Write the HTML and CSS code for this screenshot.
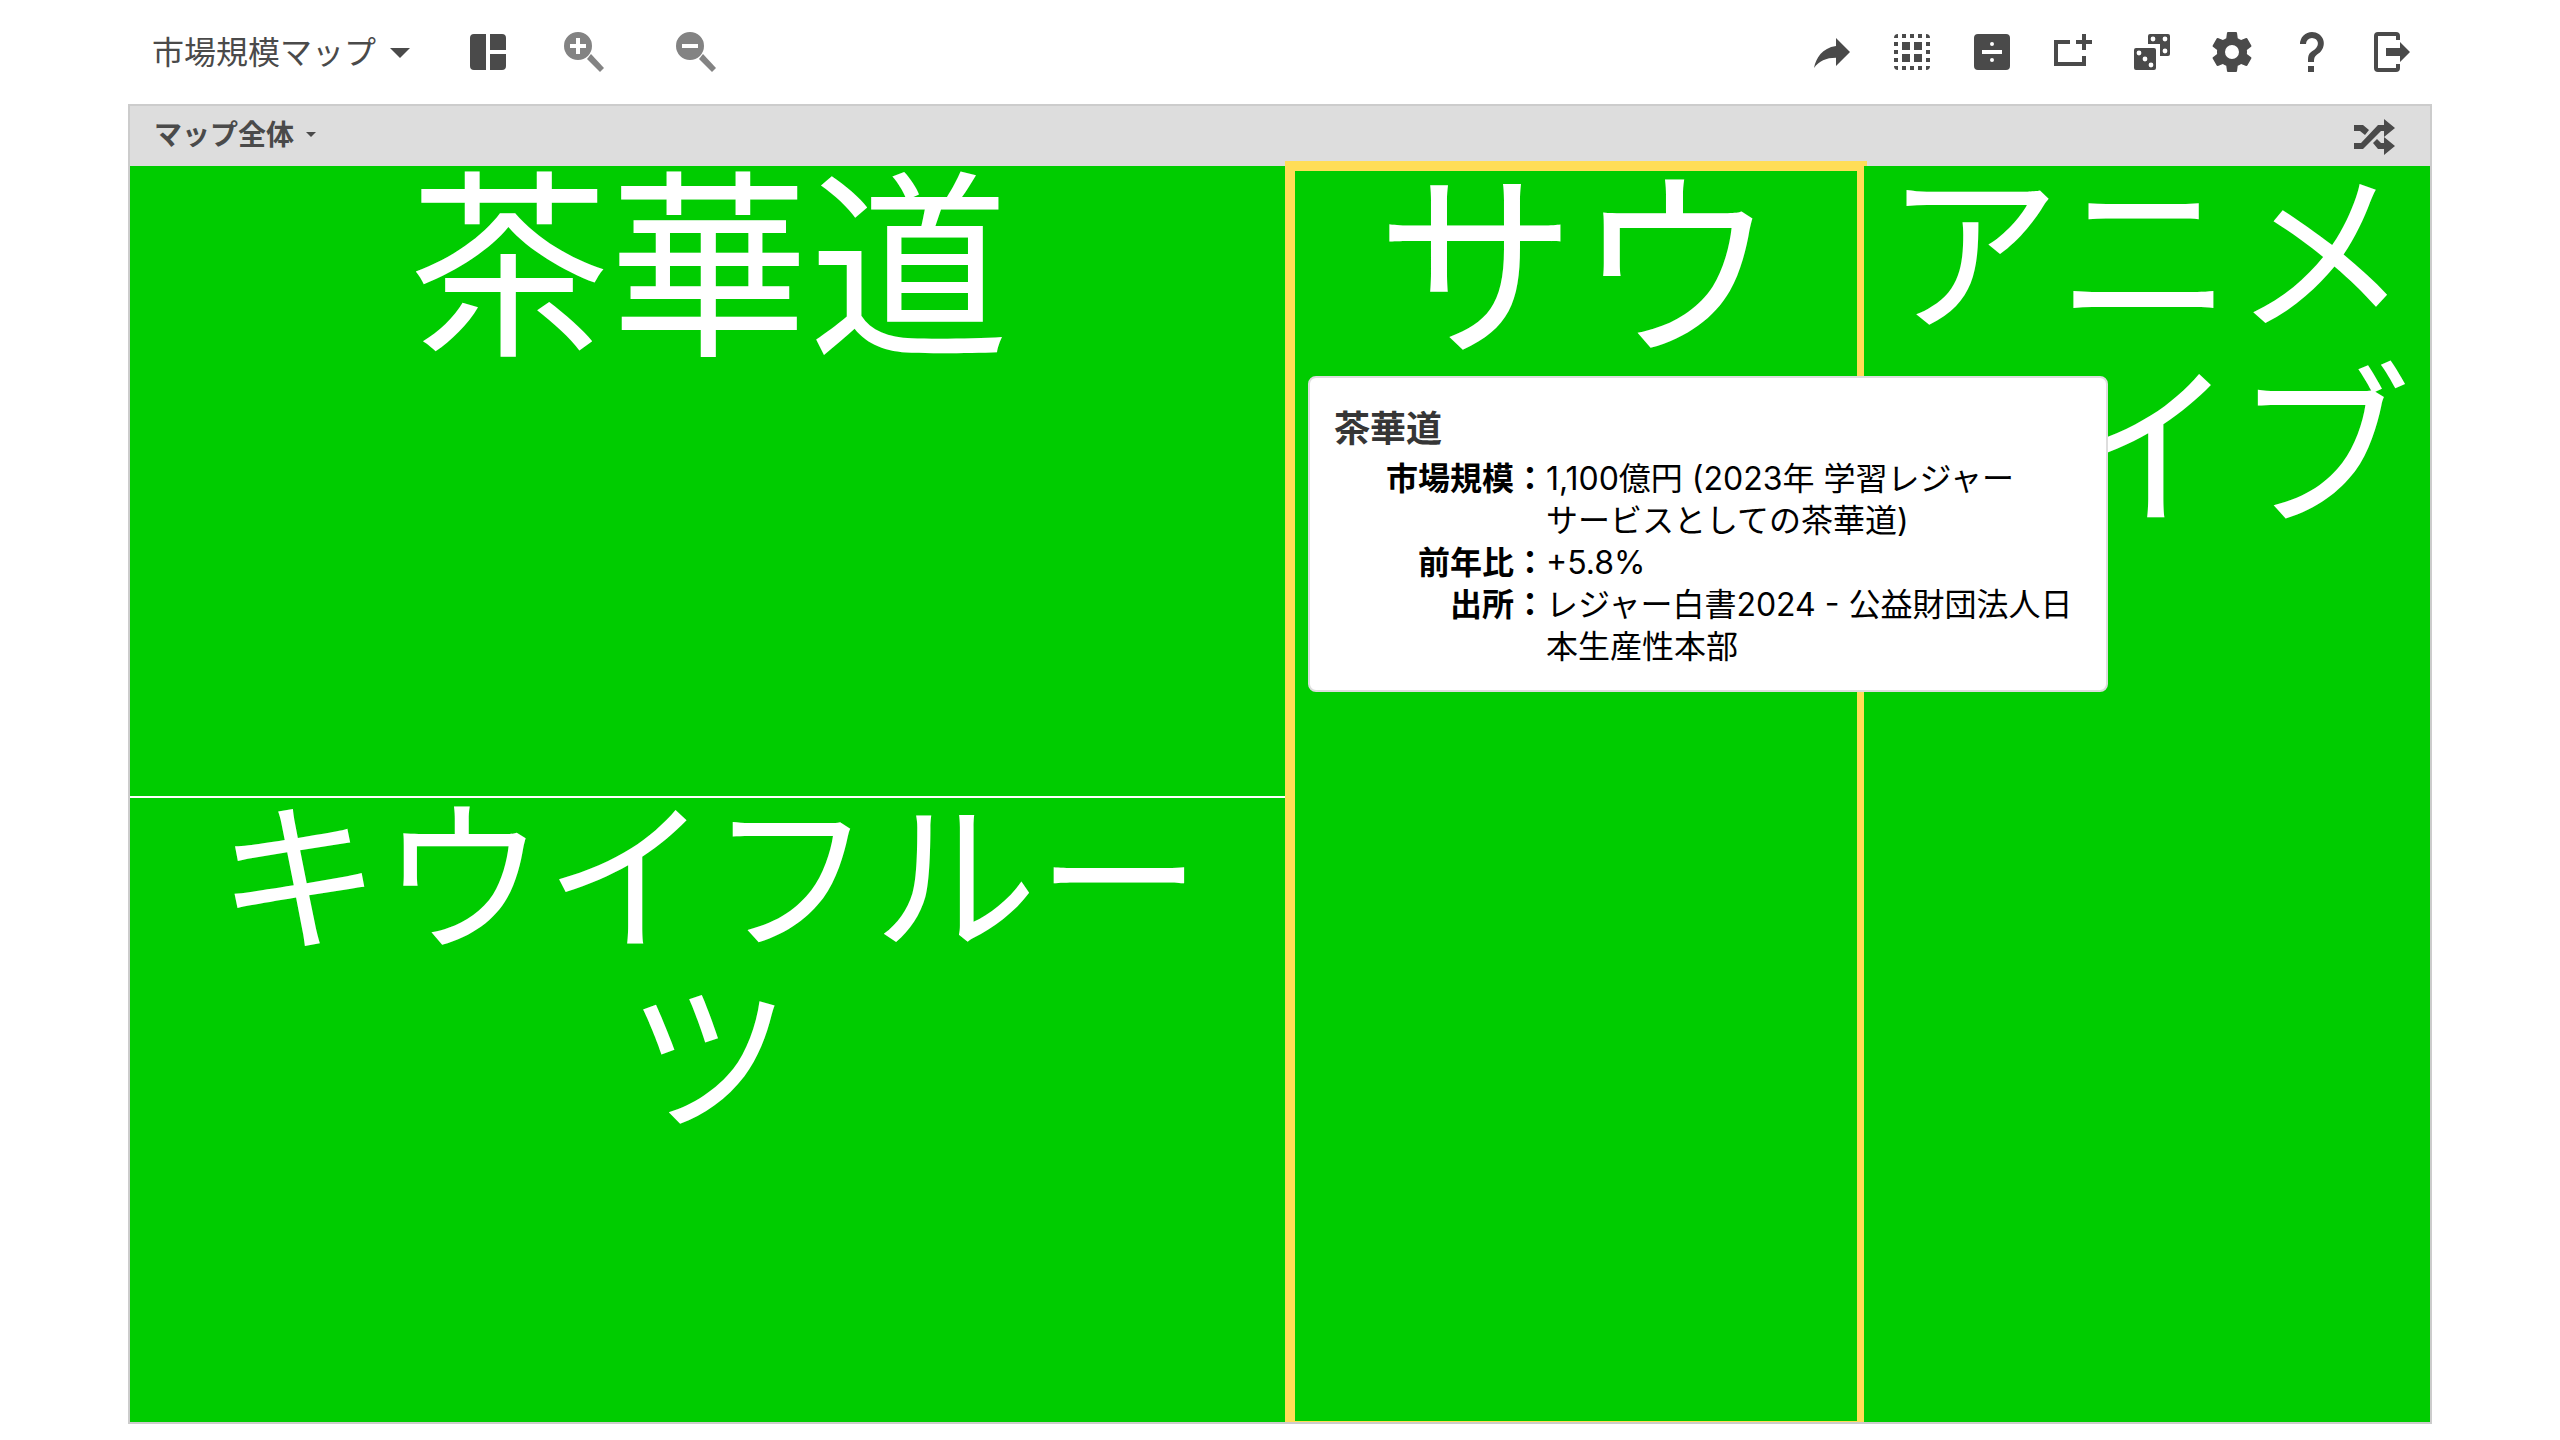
FILE: index.html
```html
<!DOCTYPE html>
<html lang="ja">
<head>
<meta charset="utf-8">
<title>市場規模マップ</title>
<meta name="viewport" content="width=device-width, initial-scale=1">
<link rel="stylesheet" href="styles.css">
</head>
<body>
<div class="page">
  <header class="toolbar">
    <button class="map-menu" type="button">市場規模マップ<span class="caret"></span></button>
    <button class="icon-button layout-button" type="button" aria-label="レイアウト">
      <svg class="icon" viewBox="0 0 24 24"><path d="M5 3H11V21H5A2 2 0 0 1 3 19V5A2 2 0 0 1 5 3ZM13 3H19A2 2 0 0 1 21 5V11H13ZM13 13H21V19A2 2 0 0 1 19 21H13Z"/></svg>
    </button>
    <div class="zoom-group">
      <button class="icon-button muted" type="button" aria-label="拡大">
        <svg class="zoom-icon" viewBox="0 0 40 40"><path fill-rule="evenodd" d="M14 0A14 14 0 1 1 14 28A14 14 0 1 1 14 0ZM12 6V12H6V16H12V22H16V16H22V12H16V6Z"/><path d="M27 22L40 36L36 40L23 27Z"/></svg>
      </button>
      <button class="icon-button muted" type="button" aria-label="縮小">
        <svg class="zoom-icon" viewBox="0 0 40 40"><path fill-rule="evenodd" d="M14 0A14 14 0 1 1 14 28A14 14 0 1 1 14 0ZM6 12V16H22V12Z"/><path d="M27 22L40 36L36 40L23 27Z"/></svg>
      </button>
    </div>
    <nav class="actions">
      <button class="icon-button" type="button" aria-label="共有">
        <svg class="icon" viewBox="0 0 24 24"><path d="M21 12L14 5V9C7 10 4 15 3 20C5.500 16.500 9 14.900 14 14.900V19Z"/></svg>
      </button>
      <button class="icon-button" type="button" aria-label="すべて選択">
        <svg class="icon" viewBox="0 0 24 24"><path d="M5 3V5H3A2 2 0 0 1 5 3ZM7 3H9V5H7ZM11 3H13V5H11ZM15 3H17V5H15ZM19 3A2 2 0 0 1 21 5H19ZM3 7H5V9H3ZM3 11H5V13H3ZM3 15H5V17H3ZM19 7H21V9H19ZM19 11H21V13H19ZM19 15H21V17H19ZM3 19H5V21A2 2 0 0 1 3 19ZM7 19H9V21H7ZM11 19H13V21H11ZM15 19H17V21H15ZM19 19H21A2 2 0 0 1 19 21ZM7 7H11V11H7ZM13 7H17V11H13ZM7 13H11V17H7ZM13 13H17V17H13Z"/></svg>
      </button>
      <button class="icon-button" type="button" aria-label="割合">
        <svg class="icon" viewBox="0 0 24 24"><path fill-rule="evenodd" d="M5 3H19A2 2 0 0 1 21 5V19A2 2 0 0 1 19 21H5A2 2 0 0 1 3 19V5A2 2 0 0 1 5 3ZM7 11V13H17V11ZM12 7A1 1 0 1 0 12 9A1 1 0 1 0 12 7ZM12 15A1 1 0 1 0 12 17A1 1 0 1 0 12 15Z"/></svg>
      </button>
      <button class="icon-button" type="button" aria-label="項目を追加">
        <svg class="icon" viewBox="0 0 24 24"><path d="M3 6H11V8H5V17H17V14H19V19H3ZM17 3H19V6H22V8H19V11H17V8H14V6H17Z"/></svg>
      </button>
      <button class="icon-button" type="button" aria-label="ランダム">
        <svg class="icon" viewBox="0 0 24 24"><path fill-rule="evenodd" d="M11 3H20A1 1 0 0 1 21 4V13A1 1 0 0 1 20 14H16V8H10V4A1 1 0 0 1 11 3ZM12.500 4.300A1.200 1.200 0 1 0 12.500 6.700A1.200 1.200 0 1 0 12.500 4.300ZM18.500 4.300A1.200 1.200 0 1 0 18.500 6.700A1.200 1.200 0 1 0 18.500 4.300ZM18.500 10.300A1.200 1.200 0 1 0 18.500 12.700A1.200 1.200 0 1 0 18.500 10.300ZM4 10H13A1 1 0 0 1 14 11V20A1 1 0 0 1 13 21H4A1 1 0 0 1 3 20V11A1 1 0 0 1 4 10ZM5.500 11.300A1.200 1.200 0 1 0 5.500 13.700A1.200 1.200 0 1 0 5.500 11.300ZM8.500 14.300A1.200 1.200 0 1 0 8.500 16.700A1.200 1.200 0 1 0 8.500 14.300ZM11.500 17.300A1.200 1.200 0 1 0 11.500 19.700A1.200 1.200 0 1 0 11.500 17.300Z"/></svg>
      </button>
      <button class="icon-button" type="button" aria-label="設定">
        <svg class="icon" viewBox="0 0 24 24"><path d="M12,15.5A3.5,3.5 0 0,1 8.5,12A3.5,3.5 0 0,1 12,8.5A3.5,3.5 0 0,1 15.5,12A3.5,3.5 0 0,1 12,15.5M19.43,12.97C19.47,12.65 19.5,12.33 19.5,12C19.5,11.67 19.47,11.34 19.43,11L21.54,9.37C21.73,9.22 21.78,8.95 21.66,8.73L19.66,5.27C19.54,5.05 19.27,4.96 19.05,5.05L16.56,6.05C16.04,5.66 15.5,5.32 14.87,5.07L14.5,2.42C14.46,2.18 14.25,2 14,2H10C9.75,2 9.54,2.18 9.5,2.42L9.13,5.07C8.5,5.32 7.96,5.66 7.44,6.05L4.95,5.05C4.73,4.96 4.46,5.05 4.34,5.27L2.34,8.73C2.21,8.95 2.27,9.22 2.46,9.37L4.57,11C4.53,11.34 4.5,11.67 4.5,12C4.5,12.33 4.53,12.65 4.57,12.97L2.46,14.63C2.27,14.78 2.21,15.05 2.34,15.27L4.34,18.73C4.46,18.95 4.73,19.03 4.95,18.95L7.44,17.94C7.96,18.34 8.5,18.68 9.13,18.93L9.5,21.58C9.54,21.82 9.75,22 10,22H14C14.25,22 14.46,21.82 14.5,21.58L14.87,18.93C15.5,18.67 16.04,18.34 16.56,17.94L19.05,18.95C19.27,19.03 19.54,18.95 19.66,18.73L21.66,15.27C21.78,15.05 21.73,14.78 21.54,14.63L19.43,12.97Z"/></svg>
      </button>
      <button class="icon-button" type="button" aria-label="ヘルプ">
        <svg class="icon" viewBox="0 0 24 24"><path d="M10,19H13V22H10V19M12,2C17.35,2.22 19.68,7.62 16.5,11.67C15.67,12.67 14.33,13.33 13.67,14.17C13,15 13,16 13,17H10C10,15.33 10,13.92 10.67,12.92C11.33,11.92 12.67,11.33 13.5,10.67C15.92,8.43 15.32,5.26 12,5A3,3 0 0,0 9,8H6A6,6 0 0,1 12,2Z"/></svg>
      </button>
      <button class="icon-button" type="button" aria-label="ログアウト">
        <svg class="icon" viewBox="0 0 24 24"><path d="M16 17V14H9V10H16V7L21 12ZM14 2A2 2 0 0 1 16 4V6H14V4H5V20H14V18H16V20A2 2 0 0 1 14 22H5A2 2 0 0 1 3 20V4A2 2 0 0 1 5 2Z"/></svg>
      </button>
    </nav>
  </header>

  <main class="map">
    <div class="map-header">
      <button class="scope-menu" type="button">マップ全体<span class="caret caret-small"></span></button>
      <button class="icon-button shuffle-button" type="button" aria-label="シャッフル">
        <svg class="shuffle-icon" viewBox="0 0 41 36"><path d="M0 24H7L24 6H30V0L41 9L30 18V12H27L9 30H0ZM0 6H9L15 11L11 16L6 12H0ZM19 24L23 20L27 24H30V18L41 27L30 36V30H24Z"/></svg>
      </button>
    </div>
    <div class="tiles">
      <div class="tile-column">
        <a class="tile tile-large" href="#sado"><span class="tile-label">茶華道</span></a>
        <a class="tile tile-small" href="#kiwi"><span class="tile-label">キウイフルーツ</span></a>
      </div>
      <a class="tile tile-large tile-selected" href="#sauna"><span class="tile-label">サウナ</span></a>
      <a class="tile tile-medium tile-last" href="#anime"><span class="tile-label">アニメライブ</span></a>
      <section class="tooltip">
        <h2 class="tooltip-title">茶華道</h2>
        <dl class="facts">
          <dt>市場規模：</dt><dd>1,100億円 (2023年 学習レジャー<br>サービスとしての茶華道)</dd>
          <dt>前年比：</dt><dd>+5.8%</dd>
          <dt>出所：</dt><dd>レジャー白書2024 - 公益財団法人日本生産性本部</dd>
        </dl>
      </section>
    </div>
  </main>
</div>
</body>
</html>
```
FILE: styles.css
```css
* {
  box-sizing: border-box;
}

body {
  margin: 0;
  background: #fff;
  color: #4a4a4a;
  font-family: Inter, "Noto Sans CJK JP", sans-serif;
}

button {
  padding: 0;
  border: 0;
  background: none;
  color: inherit;
  font: inherit;
  cursor: pointer;
}

svg {
  display: block;
  fill: currentColor;
}

.page {
  display: flex;
  flex-direction: column;
  min-height: 100vh;
  padding: 0 5% 16px;
}

/* Toolbar */
.toolbar {
  display: flex;
  align-items: center;
  height: 104px;
  padding: 0 16px 0 24px;
}

.map-menu,
.scope-menu {
  display: flex;
  align-items: center;
}

.map-menu {
  gap: 14px;
  padding-top: 2px;
  font-size: 32px;
  line-height: 48px;
}

.caret {
  border: 10px solid transparent;
  border-top-color: currentColor;
  border-bottom: 0;
}

.caret-small {
  border-width: 5px;
  border-bottom: 0;
}

.icon {
  width: 48px;
  height: 48px;
}

.layout-button {
  margin-left: 54px;
}

.zoom-group {
  display: flex;
  gap: 72px;
  margin-left: 52px;
}

.zoom-icon {
  width: 40px;
  height: 40px;
}

.muted {
  color: #838383;
}

.actions {
  display: flex;
  gap: 32px;
  margin-left: auto;
}

/* Map */
.map {
  display: flex;
  flex: 1;
  flex-direction: column;
  border: 2px solid #ccc;
}

.map-header {
  display: flex;
  align-items: center;
  justify-content: space-between;
  height: 60px;
  padding: 0 35px 0 24px;
  background: #ddd;
}

.scope-menu {
  gap: 12px;
  padding-bottom: 3px;
  font-size: 28px;
  font-weight: 700;
  line-height: 40px;
}

.shuffle-button {
  padding-top: 2px;
}

.shuffle-icon {
  width: 41px;
  height: 36px;
}

.tiles {
  position: relative;
  display: grid;
  flex: 1;
  grid-template-columns: 1158fr 572fr 566fr;
  gap: 2px;
  clip-path: inset(-5px 0 0);
}

.tile-column {
  display: grid;
  grid-template-rows: 630fr 624fr;
  gap: 2px;
}

.tile {
  display: flow-root;
  min-width: 0;
  padding: 0 8px;
  background: #00cc00;
  color: #fff;
  text-align: center;
  text-decoration: none;
  word-break: break-all;
  line-break: anywhere;
}

/* Pulls the first line up by its leading */
.tile-label {
  display: block;
  margin-top: -9px;
}

.tile-large {
  font-size: 200px;
  line-height: 220px;
}

.tile-medium {
  font-size: 176px;
  line-height: 194px;
}

.tile-small {
  font-size: 164px;
  line-height: 180px;
}

.tile-selected {
  position: relative;
  z-index: 1;
  margin-bottom: -4px;
  outline: 10px solid #ffdd57;
  outline-offset: -5px;
}

.tile-last {
  position: relative;
  z-index: 2;
}

/* Tooltip */
.tooltip {
  position: absolute;
  top: 210px;
  left: 1178px;
  z-index: 3;
  width: 800px;
  padding: 24px 24px 22px;
  border: 2px solid #ddd;
  border-radius: 8px;
  background: #fff;
  color: #000;
}

.tooltip-title {
  margin: 0 0 2px;
  color: #363636;
  font-size: 36px;
  line-height: 54px;
}

.facts {
  display: grid;
  grid-template-columns: 212px 1fr;
  margin: 0;
  font-size: 32px;
  line-height: 42px;
}

.facts dt {
  font-weight: 700;
  text-align: right;
}

.facts dd {
  margin: 0;
}
```
